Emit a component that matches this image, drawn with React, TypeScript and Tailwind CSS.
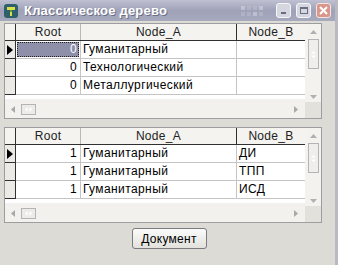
import React from 'react';

const font = { fontFamily: '"Liberation Sans", Arial, sans-serif' };

type Row = { root: string; a: string; b: string };

const top: Row[] = [
  { root: '0', a: 'Гуманитарный', b: '' },
  { root: '0', a: 'Технологический', b: '' },
  { root: '0', a: 'Металлургический', b: '' },
];

const bottom: Row[] = [
  { root: '1', a: 'Гуманитарный', b: 'ДИ' },
  { root: '1', a: 'Гуманитарный', b: 'ТПП' },
  { root: '1', a: 'Гуманитарный', b: 'ИСД' },
];

function AppIcon() {
  return (
    <svg width="16" height="16" viewBox="0 0 16 16">
      <rect x="1" y="1" width="14" height="14" rx="3" fill="#2f5f6a" />
      <path d="M4 4h8v3H9v6H7V7H4z" fill="#d8e04a" />
      <path d="M7 7h2v2H7z" fill="#5aa838" />
    </svg>
  );
}

function TitleButton({ kind }: { kind: 'min' | 'max' | 'close' }) {
  const close = kind === 'close';
  return (
    <div
      className={`w-[15px] h-[15px] rounded-[3px] border flex items-center justify-center ${
        close ? 'bg-[#d9968c] border-[#f4e4e0]' : 'bg-[#d6d6e0] border-[#f6f6fa]'
      }`}
    >
      {kind === 'min' && <div className="w-[5px] h-[2px] bg-[#6a6c80] mt-[5px]" />}
      {kind === 'max' && <div className="w-[8px] h-[7px] border border-t-2 border-[#6a6c80]" />}
      {kind === 'close' && (
        <svg width="9" height="9" viewBox="0 0 9 9">
          <path d="M1 1l7 7M8 1L1 8" stroke="#fff" strokeWidth="2" />
        </svg>
      )}
    </div>
  );
}

function Grid({ rows, selected }: { rows: Row[]; selected?: boolean }) {
  return (
    <div className="w-[318px] h-[96px] border border-[#9d9da1] bg-[#f2f1ed] flex">
      <div className="flex flex-col w-[301px]">
        <div className="flex flex-col bg-white h-[77px]">
          {/* header */}
          <div className="flex h-[17px] bg-[#f4f3ef] border-b border-[#303030] text-[12px] tracking-[0.3px] text-[#222]">
            <div className="w-[11px] border-r border-[#303030]" />
            <div className="w-[65px] border-r border-[#b8b8b8] text-center leading-[16px]">Root</div>
            <div className="w-[156px] border-r border-[#303030] text-center leading-[16px]">Node_A</div>
            <div className="w-[68px] text-center leading-[16px]">Node_B</div>
          </div>
          {rows.map((r, i) => (
            <div key={i} className="flex h-[18px] text-[12px] tracking-[0.4px] text-black">
              <div className="w-[11px] bg-[#ebeae6] border-r border-b border-[#303030] flex items-center">
                {i === 0 && (
                  <svg width="8" height="10" viewBox="0 0 8 10" className="ml-[1px]">
                    <path d="M1 0l6 5-6 5z" fill="#000" />
                  </svg>
                )}
              </div>
              <div className="w-[65px] border-r border-b border-[#c4c4c4] p-[1px]">
                <div
                  className={`h-full text-right pr-[2px] leading-[15px] ${
                    selected && i === 0 ? 'bg-[#8d90a8] text-white outline-1 outline-dotted outline-[#222] -outline-offset-1' : ''
                  }`}
                >
                  {r.root}
                </div>
              </div>
              <div className="w-[156px] border-r border-b border-[#c4c4c4] pl-[2px] leading-[17px] whitespace-nowrap overflow-hidden">
                {r.a}
              </div>
              <div className="w-[68px] border-b border-[#c4c4c4] pl-[2px] leading-[17px]">{r.b}</div>
            </div>
          ))}
        </div>
        {/* horizontal scrollbar */}
        <div className="h-[17px] mt-[2px] flex items-center">
          <svg width="6" height="7" viewBox="0 0 6 7" className="ml-[6px]">
            <path d="M4 0v7L0 3.5z" fill="#a8a8a8" />
          </svg>
          <div className="ml-[4px] w-[15px] h-[11px] border border-[#b4b4b8] bg-[#ecebe8] flex items-center justify-center">
            <svg width="7" height="5" viewBox="0 0 7 5">
              <path d="M0 2.5L2.5 0v5zM7 2.5L4.5 0v5z" fill="#fff" />
            </svg>
          </div>
          <div className="flex-1" />
          <svg width="6" height="7" viewBox="0 0 6 7" className="mr-[6px]">
            <path d="M1 0v7l4-3.5z" fill="#a8a8a8" />
          </svg>
        </div>
      </div>
      {/* vertical scrollbar */}
      <div className="w-[16px] flex flex-col">
        <div className="h-[78px] bg-[#f3f2ef] flex flex-col items-center">
          <svg width="7" height="5" viewBox="0 0 7 5" className="mt-[6px]">
            <path d="M0 4h7L3.5 0z" fill="#b0b0b0" />
          </svg>
          <div className="mt-[4px] w-[11px] h-[30px] border border-[#b4b4b8] bg-[#efeeeb] flex items-center justify-center">
            <svg width="5" height="7" viewBox="0 0 5 7">
              <path d="M2.5 0L5 2.5H0zM2.5 7L5 4.5H0z" fill="#fff" />
            </svg>
          </div>
          <div className="flex-1" />
          <svg width="7" height="5" viewBox="0 0 7 5" className="mb-[3px]">
            <path d="M0 1h7L3.5 5z" fill="#b0b0b0" />
          </svg>
        </div>
        <div className="flex-1 bg-[#e2e1dc]" />
      </div>
    </div>
  );
}

export default function App() {
  return (
    <div className="w-[338px] h-[265px] bg-[#dcdbd6] flex flex-col border-r-[3px] border-[#b9b9c4]" style={font}>
      {/* title bar */}
      <div className="h-[21px] bg-gradient-to-b from-[#bfc1d2] via-[#9fa2b8] to-[#a7aabd] flex items-center pl-[3px] pr-[4px] gap-[5px]">
        <AppIcon />
        <span className="text-white font-bold text-[13px] tracking-[0.2px] [text-shadow:1px_1px_0_#6c6e84]">
          Классическое дерево
        </span>
        <div className="flex-1 flex justify-end pr-[8px] opacity-40">
          <div className="grid grid-cols-4 gap-[2px]">
            {Array.from({ length: 8 }).map((_, i) => (
              <div key={i} className={`w-[4px] h-[4px] ${i % 3 === 0 ? 'bg-[#e8e8f0]' : 'bg-[#c4c6d6]'}`} />
            ))}
          </div>
        </div>
        <div className="flex gap-[5px]">
          <TitleButton kind="min" />
          <TitleButton kind="max" />
          <TitleButton kind="close" />
        </div>
      </div>
      <div className="flex flex-col pl-[4px] pt-[2px]">
        <Grid rows={top} selected />
        <div className="h-[8px]" />
        <Grid rows={bottom} />
        <div className="flex justify-center pt-[5px] pr-[1px]">
          <button className="w-[75px] h-[21px] rounded-[3px] border border-[#7a7a80] bg-gradient-to-b from-[#fbfbfb] to-[#e2e1dc] text-[12px] tracking-[0.3px] text-black">
            Документ
          </button>
        </div>
      </div>
    </div>
  );
}
